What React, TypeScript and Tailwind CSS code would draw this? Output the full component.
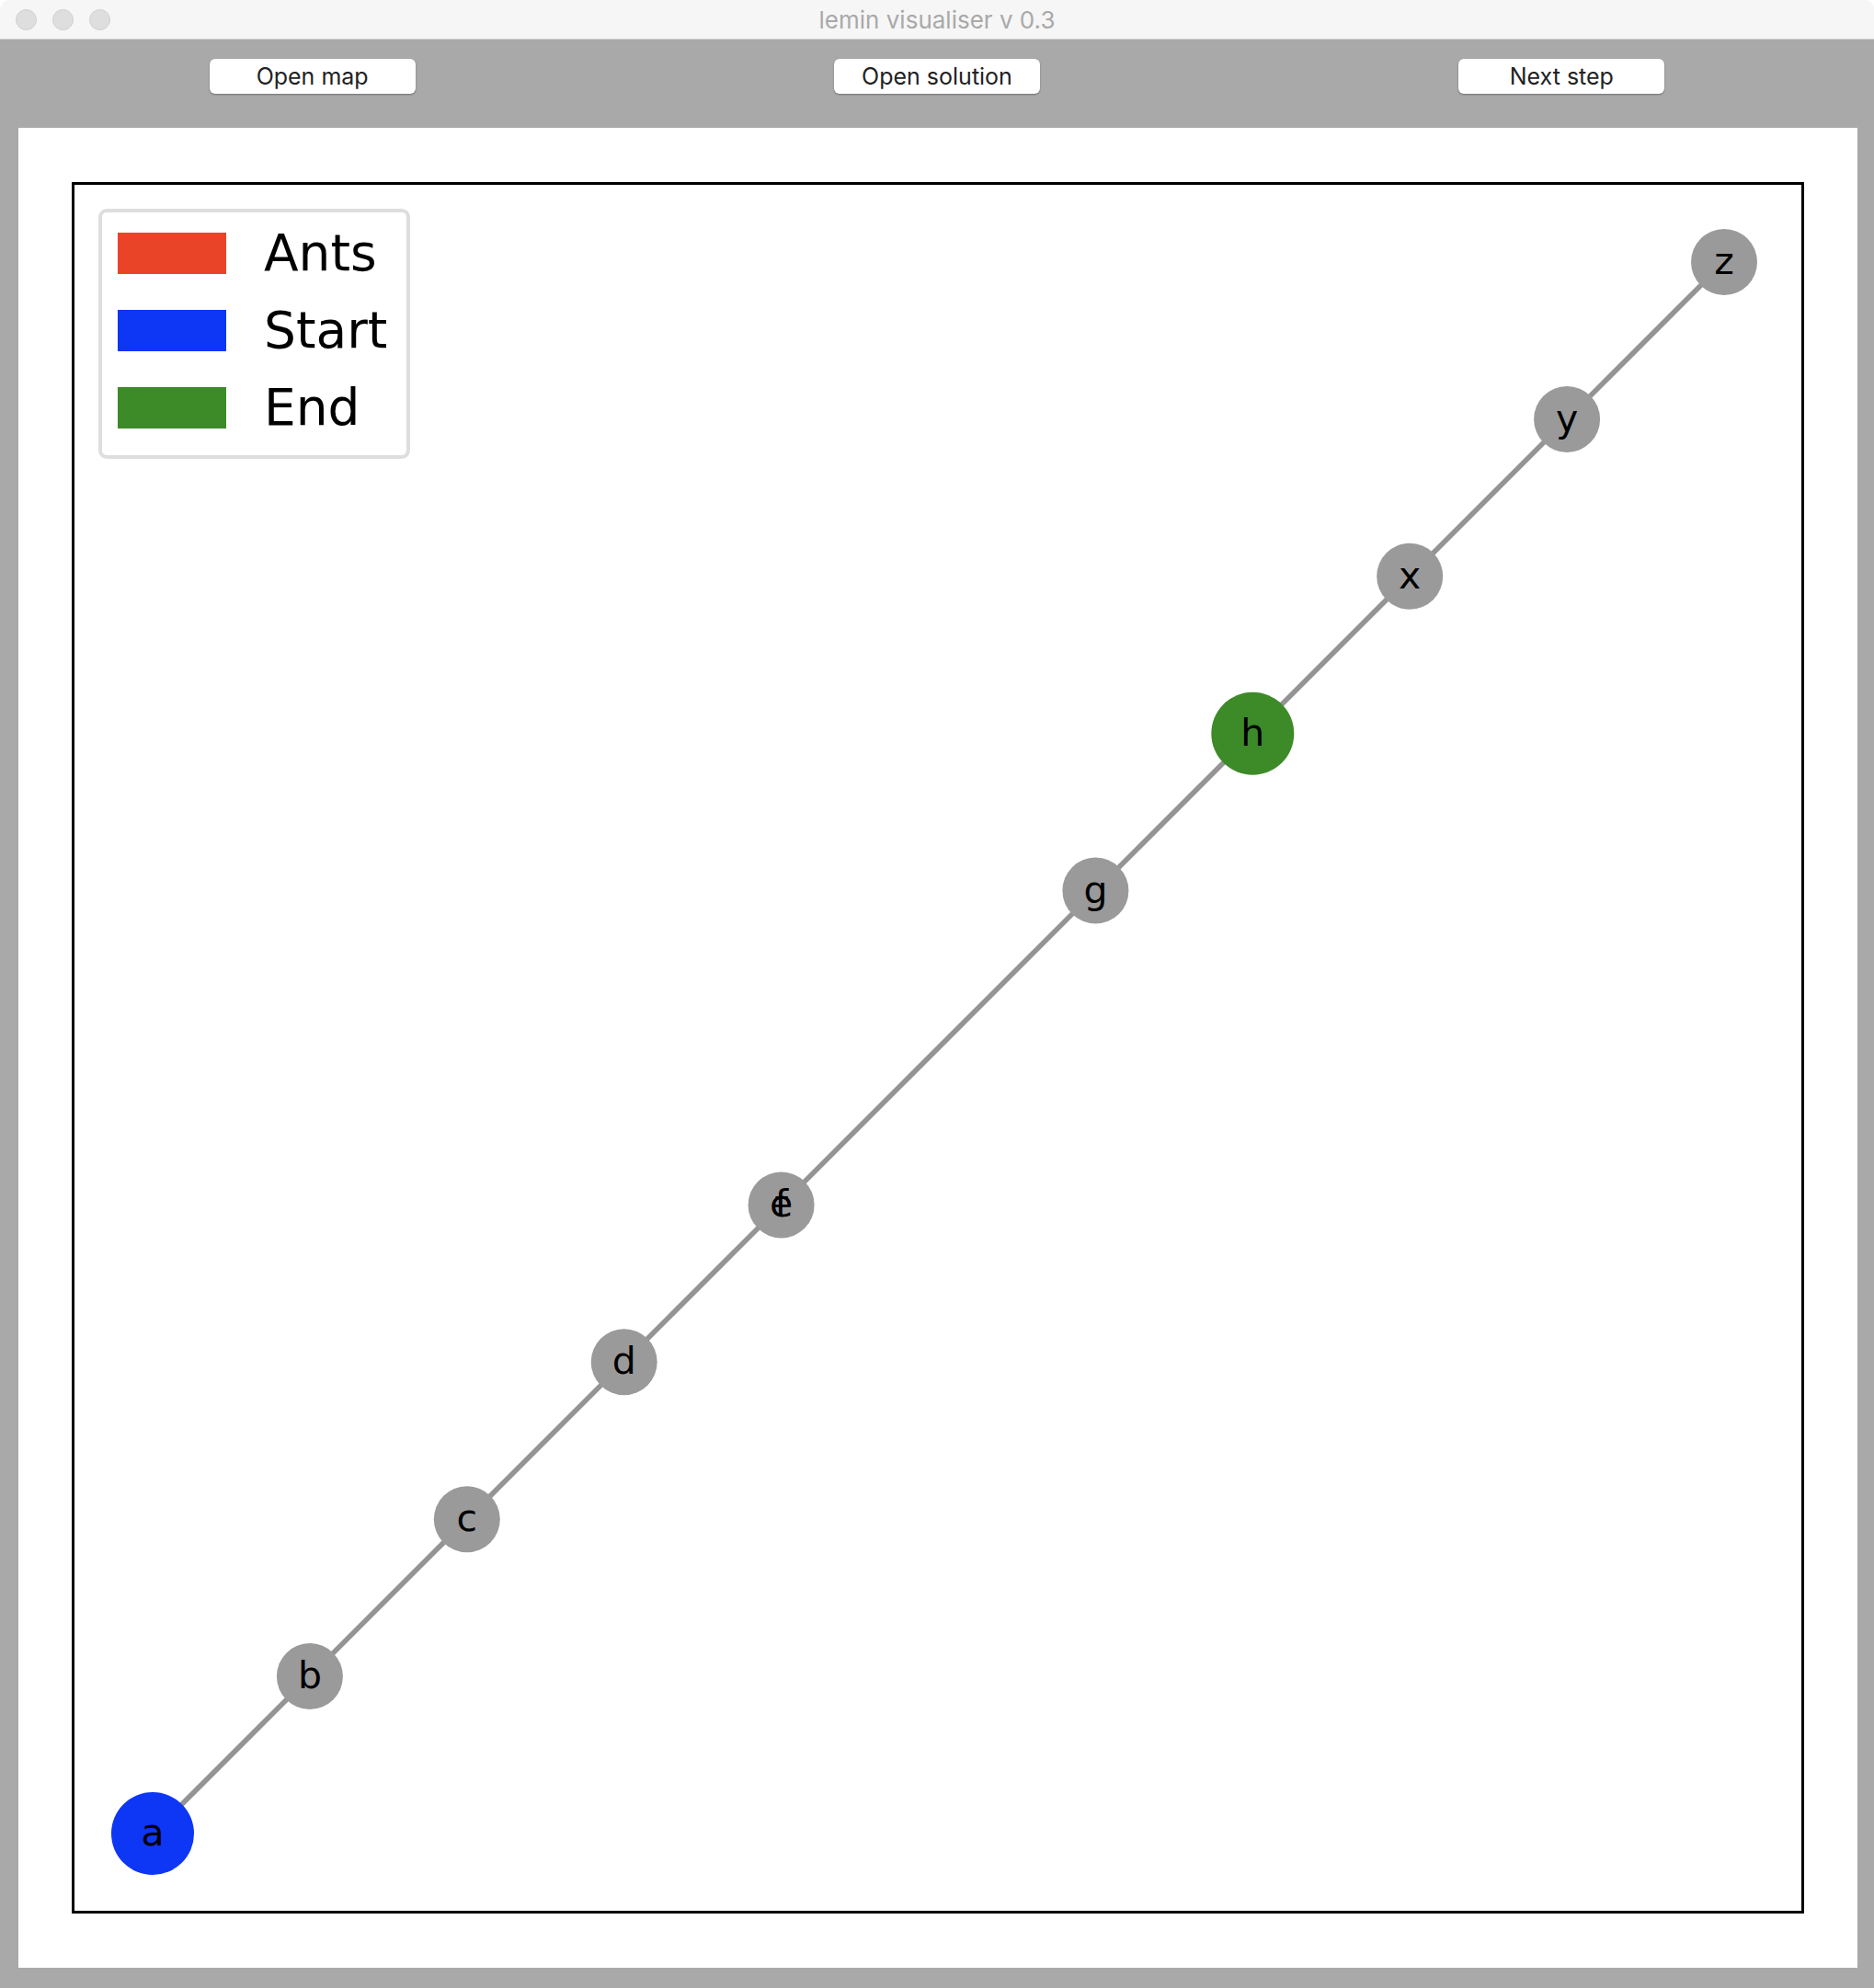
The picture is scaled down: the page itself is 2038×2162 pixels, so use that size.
import React from "react";

type GraphNode = { id: string; labels: string[]; step: number; kind: "room" | "start" | "end" };

// node positions sit on one diagonal: a at the bottom-left, one step per room
const ORIGIN_X = 85;
const ORIGIN_Y = 1793;
const STEP = 170.9;

const nodes: GraphNode[] = [
  { id: "a", labels: ["a"], step: 0, kind: "start" },
  { id: "b", labels: ["b"], step: 1, kind: "room" },
  { id: "c", labels: ["c"], step: 2, kind: "room" },
  { id: "d", labels: ["d"], step: 3, kind: "room" },
  { id: "ef", labels: ["e", "f"], step: 4, kind: "room" },
  { id: "g", labels: ["g"], step: 6, kind: "room" },
  { id: "h", labels: ["h"], step: 7, kind: "end" },
  { id: "x", labels: ["x"], step: 8, kind: "room" },
  { id: "y", labels: ["y"], step: 9, kind: "room" },
  { id: "z", labels: ["z"], step: 10, kind: "room" },
];

const fills = { room: "#9a9a9a", start: "#0e36f5", end: "#3d8a28" };

const pos = (step: number) => ({ x: ORIGIN_X + STEP * step, y: ORIGIN_Y - STEP * step });

const legend = [
  { label: "Ants", color: "bg-[#ea4428]" },
  { label: "Start", color: "bg-[#0e36f5]" },
  { label: "End", color: "bg-[#3d8a28]" },
];

function ToolButton({ children }: { children: React.ReactNode }) {
  return (
    <button className="h-[38px] w-[224px] rounded-[6px] bg-white text-[25px] leading-none text-[#222] shadow-[0_1px_2px_rgba(0,0,0,0.35)]">
      {children}
    </button>
  );
}

export default function App() {
  const start = pos(0);
  const end = pos(10);

  return (
    <div
      className="flex h-[2162px] w-[2038px] flex-col overflow-hidden bg-white"
      style={{ fontFamily: "Inter, 'Liberation Sans', sans-serif" }}
    >
      {/* title bar */}
      <div className="grid h-[43px] grid-cols-[1fr_auto_1fr] items-center rounded-t-[10px] border-b border-[#d2d2d2] bg-[#f6f6f6]">
        <div className="flex gap-[17px] pl-[17px]">
          <span className="size-[23px] rounded-full border border-[#d0d0d0] bg-[#dedede]" />
          <span className="size-[23px] rounded-full border border-[#d0d0d0] bg-[#dedede]" />
          <span className="size-[23px] rounded-full border border-[#d0d0d0] bg-[#dedede]" />
        </div>
        <span className="pt-[2px] text-[26px] leading-none text-[#a9a9a9]">lemin visualiser v 0.3</span>
        <div />
      </div>

      {/* toolbar */}
      <div className="grid h-[96px] grid-cols-3 items-start justify-items-center bg-[#a9a9a9] pt-[21px]">
        <ToolButton>Open map</ToolButton>
        <ToolButton>Open solution</ToolButton>
        <ToolButton>Next step</ToolButton>
      </div>

      {/* plot area */}
      <div className="flex flex-1 bg-[#a9a9a9] pb-[22px] pl-[20px] pr-[18px]">
        <div className="flex flex-1 bg-white px-[58px] pb-[59px] pt-[59px]">
          <div className="relative flex-1 border-[3px] border-black">
            <svg className="absolute inset-0 h-full w-full" viewBox="0 0 1878 1877">
              <line
                x1={start.x}
                y1={start.y}
                x2={end.x}
                y2={end.y}
                stroke="#949494"
                strokeWidth={5.5}
              />
              {nodes.map((n) => {
                const p = pos(n.step);
                return (
                  <g key={n.id}>
                    <circle cx={p.x} cy={p.y} r={n.kind === "room" ? 36 : 45} fill={fills[n.kind]} />
                    {n.labels.map((l) => (
                      <text
                        key={l}
                        x={p.x}
                        y={p.y + 13}
                        textAnchor="middle"
                        fontSize={41}
                        fontFamily="'DejaVu Sans', sans-serif"
                        fill="#000"
                      >
                        {l}
                      </text>
                    ))}
                  </g>
                );
              })}
            </svg>

            {/* legend overlays the plot */}
            <div
              className="absolute left-[26px] top-[26px] flex h-[272px] w-[339px] flex-col gap-[39px] rounded-[9px] border-4 border-[#dedede] bg-white pl-[17px] pt-[22px]"
              style={{ fontFamily: "'DejaVu Sans', sans-serif" }}
            >
              {legend.map((item) => (
                <div key={item.label} className="flex h-[45px] items-center gap-[41px]">
                  <span className={`h-[45px] w-[118px] ${item.color}`} />
                  <span className="text-[55px] leading-none text-black">{item.label}</span>
                </div>
              ))}
            </div>
          </div>
        </div>
      </div>
    </div>
  );
}
